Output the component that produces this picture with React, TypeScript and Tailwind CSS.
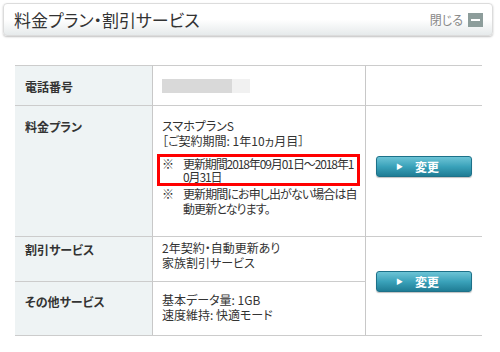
import React from "react";

function ChangeButton() {
  return (
    <button
      type="button"
      className="flex h-[21px] w-[96px] items-center rounded-[3px] border border-[#1d7189] bg-gradient-to-b from-[#6cc4d6] via-[#3aa2ba] to-[#1f7d95] pl-[19px] text-white shadow-[0_1px_1px_rgba(0,0,0,0.25)]"
    >
      <span className="text-[7px] leading-none">▶</span>
      <span className="ml-[12px] text-[12px] font-bold leading-none">変更</span>
    </button>
  );
}

export default function App() {
  const labelCell =
    "border-t border-[#cccccc] border-r border-r-[#c8c8c8] border-r-dotted bg-[#eef3f4] pl-[10px] text-[12px] font-bold text-[#333]";
  const valueCell =
    "border-t border-[#cccccc] border-r border-r-[#c8c8c8] border-r-dotted pl-[9px] text-[12px] leading-[15px] text-[#333]";

  return (
    <div className="h-[352px] w-[500px] bg-white font-['Noto_Sans_CJK_JP','Noto_Sans',sans-serif] [font-feature-settings:'palt']">
      <div className="pt-[3px] pl-[3px]">
        <div className="flex h-[33px] w-[490px] items-center justify-between rounded-[4px] border border-[#dcdcdc] bg-gradient-to-b from-white via-white to-[#e6eaeb] pl-[10px] pr-[9px] shadow-[0_1px_2px_rgba(0,0,0,0.25)]">
          <h1 className="text-[17px] leading-none text-[#333]">
            料金プラン・割引サービス
          </h1>
          <div className="flex items-center gap-[5px]">
            <span className="text-[12px] text-[#888]">閉じる</span>
            <span className="flex h-[14px] w-[15px] items-center justify-center bg-[#8d9d9b]">
              <span className="h-[2px] w-[9px] bg-white" />
            </span>
          </div>
        </div>
      </div>

      <div className="ml-[15px] mt-[29px] grid w-[467px] grid-cols-[138px_213px_116px] grid-rows-[40px_131px_45px_54px] border-b border-[#cccccc]">
        {/* 電話番号 */}
        <div className={`${labelCell} pt-[12px]`}>電話番号</div>
        <div className={`${valueCell} flex items-center`}>
          <div className="flex h-[14px]">
            <div className="w-[70px] bg-[#d9d9d9]" />
            <div className="w-[18px] bg-[#f1f1f1]" />
          </div>
        </div>
        <div className="border-t border-[#cccccc]" />

        {/* 料金プラン */}
        <div className={`${labelCell} pt-[12px]`}>料金プラン</div>
        <div className={`${valueCell} pt-[12px] pr-[6px]`}>
          <p>スマホプランS</p>
          <p>［ご契約期間: 1年10ヵ月目］</p>
          <div className="mt-[6px] -ml-[5px] w-[203px] whitespace-nowrap border-[3px] border-[#ff0000] pl-[2px] leading-[13px]">
            <div className="flex">
              <span className="w-[21px] shrink-0">※</span>
              <span className="tracking-[-1.1px]">
                更新期間2018年09月01日～2018年1
                <br />
                0月31日
              </span>
            </div>
          </div>
          <div className="flex whitespace-nowrap">
            <span className="w-[21px] shrink-0">※</span>
            <span className="tracking-[-0.9px]">
              更新期間にお申し出がない場合は自
              <br />
              動更新となります。
            </span>
          </div>
        </div>
        <div className="border-t border-[#cccccc] pt-[50px] pl-[10px]">
          <ChangeButton />
        </div>

        {/* 割引サービス */}
        <div className={`${labelCell} pt-[4px]`}>割引サービス</div>
        <div className={`${valueCell} pt-[3px]`}>
          <p>2年契約・自動更新あり</p>
          <p>家族割引サービス</p>
        </div>
        <div className="row-span-2 border-t border-[#cccccc] pt-[34px] pl-[10px]">
          <ChangeButton />
        </div>

        {/* その他サービス */}
        <div className={`${labelCell} pt-[11px]`}>その他サービス</div>
        <div className={`${valueCell} pt-[10px]`}>
          <p>基本データ量: 1GB</p>
          <p>速度維持: 快適モード</p>
        </div>
      </div>
    </div>
  );
}
